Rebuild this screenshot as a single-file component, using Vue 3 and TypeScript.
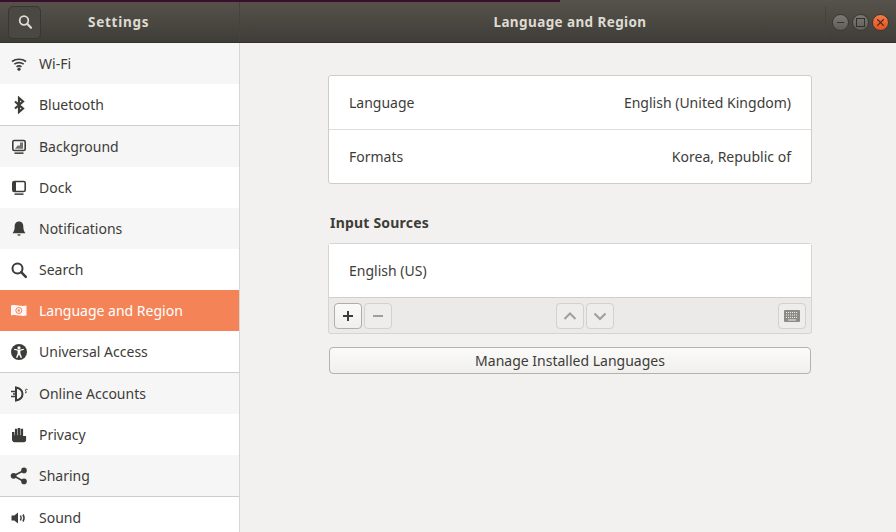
<script setup lang="ts">
interface Item { label: string; icon: string; striped: boolean; active?: boolean; sepAfter?: boolean }
const items: Item[] = [
  { label: 'Wi-Fi', icon: 'wifi', striped: true },
  { label: 'Bluetooth', icon: 'bt', striped: false, sepAfter: true },
  { label: 'Background', icon: 'bg', striped: true },
  { label: 'Dock', icon: 'dock', striped: false },
  { label: 'Notifications', icon: 'bell', striped: true },
  { label: 'Search', icon: 'search', striped: false },
  { label: 'Language and Region', icon: 'flag', striped: false, active: true },
  { label: 'Universal Access', icon: 'access', striped: false, sepAfter: true },
  { label: 'Online Accounts', icon: 'online', striped: true },
  { label: 'Privacy', icon: 'hand', striped: false },
  { label: 'Sharing', icon: 'share', striped: true, sepAfter: true },
  { label: 'Sound', icon: 'sound', striped: false },
]
</script>

<template>
  <div class="win">
    <header class="bar">
      <div class="bar-left">
        <button class="search-btn">
          <svg width="16" height="16" viewBox="0 0 16 16"><circle cx="7" cy="6.500" r="4.300" fill="none" stroke="#dedbd4" stroke-width="1.800"/><path d="M10.200 9.800 14 13.800" stroke="#dedbd4" stroke-width="2.200" stroke-linecap="round"/></svg>
        </button>
        <span class="bar-title settings">Settings</span>
      </div>
      <div class="bar-main">
        <span class="bar-title main-title">Language and Region</span>
        <div class="controls">
          <span class="ctl"><svg width="18" height="18" viewBox="0 0 18 18"><path d="M4 9h10" stroke="#2f2e2a" stroke-width="1.300"/></svg></span>
          <span class="ctl"><svg width="18" height="18" viewBox="0 0 18 18"><rect x="3.500" y="3.500" width="11" height="11" fill="none" stroke="#2f2e2a" stroke-width="1.300"/></svg></span>
          <span class="ctl close"><svg width="18" height="18" viewBox="0 0 18 18"><path d="M4.500 4.500l9 9M13.500 4.500l-9 9" stroke="#4a2a18" stroke-width="1.500"/></svg></span>
        </div>
      </div>
    </header>
    <div class="body">
      <nav class="side">
        <div v-for="it in items" :key="it.label" class="row" :class="{ striped: it.striped, active: it.active, sep: it.sepAfter }">
          <svg class="ico" width="18" height="18" viewBox="0 0 18 18">
            <g v-if="it.icon === 'wifi'" fill="none" stroke="currentColor" stroke-width="1.600">
              <path d="M2 6.500c4-3 10-3 14 0"/><path d="M4.300 9.200c3-2 6.400-2 9.400 0"/><path d="M6.500 11.700c1.600-1 3.400-1 5 0"/>
              <circle cx="9" cy="14.200" r="1.600" fill="currentColor" stroke="none"/>
            </g>
            <path v-else-if="it.icon === 'bt'" d="M5 5.500l8 7-4 3.500V2l4 3.500-8 7" fill="none" stroke="currentColor" stroke-width="2.200"/>
            <g v-else-if="it.icon === 'bg'">
              <rect x="2.800" y="2.500" width="12.400" height="10" rx="1.500" fill="none" stroke="currentColor" stroke-width="1.600"/>
              <path d="M5 10.800h8V4.600h-3v3H7.500z" fill="currentColor" opacity=".7"/>
              <rect x="4.500" y="14.400" width="9" height="1.500" fill="currentColor"/>
            </g>
            <g v-else-if="it.icon === 'dock'">
              <rect x="2.800" y="2.500" width="12.400" height="10" rx="1.500" fill="none" stroke="currentColor" stroke-width="1.600"/>
              <rect x="3" y="3" width="3" height="9" fill="currentColor"/>
              <rect x="4.500" y="14.400" width="9" height="1.500" fill="currentColor"/>
            </g>
            <g v-else-if="it.icon === 'bell'" fill="currentColor">
              <path d="M9 1.500c-3 0-4.300 2.300-4.300 5 0 3.200-.9 5-2.200 6.700h13c-1.300-1.700-2.200-3.500-2.200-6.700 0-2.700-1.300-5-4.300-5z"/><rect x="7.600" y="14.300" width="2.800" height="1.300"/>
            </g>
            <g v-else-if="it.icon === 'search'" fill="none" stroke="currentColor">
              <circle cx="7.500" cy="7.500" r="5" stroke-width="2"/><path d="M11.200 11.200l4.600 4.600" stroke-width="2.500" stroke-linecap="round"/>
            </g>
            <g v-else-if="it.icon === 'flag'">
              <path d="M1 3.500c5.500-1.500 10 1.500 15.500 0v10c-5.500 1.500-10-1.500-15.500 0z" fill="#fff" opacity=".92"/>
              <circle cx="8.800" cy="8.500" r="3" fill="none" stroke="#f3845a" stroke-width="1"/>
              <circle cx="8.800" cy="8.500" r="1.200" fill="#f3845a"/>
            </g>
            <g v-else-if="it.icon === 'access'">
              <circle cx="9" cy="9" r="8" fill="currentColor"/>
              <circle cx="9" cy="4.800" r="1.600" fill="#fff"/>
              <path d="M4 6.800l3.600 1v2.700L6 14.500l1.200.5L9 11.500l1.800 3.500 1.200-.5-1.600-4V7.800l3.600-1-.3-1.100L9 6.800 4.300 5.700z" fill="#fff"/>
            </g>
            <g v-else-if="it.icon === 'online'" fill="none" stroke="currentColor">
              <path d="M6 2.500c4.500 1 6.500 3.500 6.500 6.500S10.500 14.500 6 15.500z" stroke-width="2"/>
              <path d="M1 6.500h5M1 11.500h5M3 9h3" stroke-width="1.600"/>
              <path d="M17.500 4.500c-1.800-.8-2.600.5-1.800 1.500.8 1 1.200 2-.7 1.800" stroke-width="1"/>
            </g>
            <path v-else-if="it.icon === 'hand'" fill="currentColor" d="M2 6h2.400v3.200h.5V2.800h2.400v6.400h.5V2h2.400v7.200h.5V2.800h2.400V10h3v4c0 1.300-1 2.200-2.200 2.200H4.500C3 16.200 2 15 2 13.600z"/>
            <g v-else-if="it.icon === 'share'" fill="currentColor">
              <circle cx="3.600" cy="8.800" r="2.900"/><circle cx="14" cy="3.400" r="2.800"/><circle cx="14" cy="14.400" r="2.800"/>
              <path d="M3.600 8.800l10.400-5.400M3.600 8.800L14 14.400" stroke="currentColor" stroke-width="1.700"/>
            </g>
            <g v-else-if="it.icon === 'sound'" fill="currentColor">
              <path d="M1.500 6.500h2.800L8 3.500v11l-3.700-3H1.500z"/>
              <path d="M10.500 6.500c.8 1.500.8 3.500 0 5M13 5.500c1.200 2 1.200 5 0 7" fill="none" stroke="currentColor" stroke-width="1.500"/>
            </g>
          </svg>
          <span class="row-label">{{ it.label }}</span>
        </div>
      </nav>
      <main class="content">
        <section class="card">
          <div class="line"><span>Language</span><span>English (United Kingdom)</span></div>
          <div class="line divided"><span>Formats</span><span>Korea, Republic of</span></div>
        </section>
        <h2 class="heading">Input Sources</h2>
        <section class="inputs">
          <div class="input-row">English (US)</div>
          <div class="toolbar">
            <div class="group">
              <button class="tool on"><svg width="16" height="16" viewBox="0 0 16 16"><path d="M8 3v10M3 8h10" stroke="#3d3c38" stroke-width="2"/></svg></button>
              <button class="tool"><svg width="16" height="16" viewBox="0 0 16 16"><path d="M3 8h10" stroke="#a09e99" stroke-width="2"/></svg></button>
            </div>
            <div class="group">
              <button class="tool"><svg width="16" height="16" viewBox="0 0 16 16"><path d="M2.500 11L8 5.500 13.500 11" fill="none" stroke="#a09e99" stroke-width="2"/></svg></button>
              <button class="tool"><svg width="16" height="16" viewBox="0 0 16 16"><path d="M2.500 5.500L8 11l5.500-5.500" fill="none" stroke="#a09e99" stroke-width="2"/></svg></button>
            </div>
            <div class="group">
              <button class="tool"><svg width="18" height="14" viewBox="0 0 18 14"><rect x="1" y="1" width="16" height="12" rx="1" fill="#8d8b86"/><path d="M3 3.500h12M3 6h12M3 8.500h12" stroke="#efeeec" stroke-width="1" stroke-dasharray="1 1"/><path d="M5 11h8" stroke="#efeeec" stroke-width="1"/></svg></button>
            </div>
          </div>
        </section>
        <button class="manage">Manage Installed Languages</button>
      </main>
    </div>
  </div>
</template>

<style scoped>
.win { width: 896px; height: 532px; overflow: hidden; display: flex; flex-direction: column; font-family: "Noto Sans", "Open Sans", sans-serif; font-size: 14px; color: #3d3c38; background: #f2f1ef; }
.bar { height: 43px; flex: none; box-sizing: border-box; display: flex; background: linear-gradient(#3a0f2c 0, #3a0f2c 2px, #56524b 2px, #3f3d38 100%); border-bottom: 1px solid #33312d; padding-top: 2px; }
.bar-left { width: 240px; flex: none; box-sizing: border-box; display: flex; align-items: center; padding-left: 8px; border-right: 1px solid #45433e; }
.search-btn { width: 33px; height: 33px; box-sizing: border-box; padding: 0; display: flex; align-items: center; justify-content: center; border: 1px solid #383732; border-radius: 5px; background: #4a4842; }
.bar-title { font-weight: 700; font-size: 13.500px; color: #dfdbd2; letter-spacing: .4px; }
.settings { margin-left: 47px; letter-spacing: .75px; }
.main-title { margin-left: 4px; }
.bar-main { flex: 1; position: relative; display: flex; align-items: center; justify-content: center; }
.bar-main::before { content: ""; position: absolute; left: 320px; right: 0; top: -2px; height: 2px; background: #56534d; }
.controls { position: absolute; right: 7px; top: 4px; display: flex; gap: 3px; border-left: 1px solid #45433e; padding-left: 6px; height: 32px; align-items: center; }
.ctl { width: 17px; height: 17px; box-sizing: border-box; border-radius: 50%; background: linear-gradient(#7b7972, #5f5d57); display: flex; align-items: center; justify-content: center; border: 1px solid #3a3833; }
.ctl svg { width: 13px; height: 13px; }
.close { background: linear-gradient(#f37a4a, #e3541f); }
.body { flex: 1; display: flex; min-height: 0; }
.side { width: 240px; flex: none; box-sizing: border-box; background: #fff; border-right: 1px solid #d8d6d2; overflow: hidden; }
.row { height: 41px; display: flex; align-items: center; padding-left: 10px; box-sizing: content-box; }
.row.striped { background: #f6f6f6; }
.row.active { background: #f48458; color: #fff; }
.row.sep { border-bottom: 1px solid #cfcdc9; }
.ico { flex: none; color: #3d3c38; }
.active .ico { color: #fff; }
.row-label { margin-left: 11px; }
.content { flex: 1; display: flex; flex-direction: column; align-items: flex-start; padding: 32px 0 0 88px; }
.card { width: 484px; box-sizing: border-box; background: #fff; border: 1px solid #cfcdc9; border-radius: 3px; }
.line { height: 53px; display: flex; justify-content: space-between; align-items: center; padding: 0 20px; }
.line.divided { height: 54px; box-sizing: border-box; border-top: 1px solid #dedcd9; }
.heading { margin: 29px 0 11px 2px; font-size: 14px; font-weight: 700; line-height: 19px; color: #3d3c38; letter-spacing: .2px; }
.inputs { width: 484px; box-sizing: border-box; border: 1px solid #d6d4d0; border-radius: 3px; background: #ebeae8; }
.input-row { height: 54px; box-sizing: border-box; background: #fff; display: flex; align-items: center; padding-left: 20px; border-bottom: 1px solid #d0cecb; }
.toolbar { height: 35px; display: flex; justify-content: space-between; align-items: center; padding: 0 5px; }
.group { display: flex; gap: 2px; }
.tool { width: 28px; height: 26px; box-sizing: border-box; padding: 0; display: flex; align-items: center; justify-content: center; border: 1px solid #d3d1cd; border-radius: 4px; background: #eeedeb; }
.tool.on { border-color: #b0aea9; background: linear-gradient(#fafafa, #f0efed); }
.manage { margin: 13px 0 0 1px; width: 482px; height: 27px; box-sizing: border-box; padding: 0; border: 1px solid #b4b2ad; border-radius: 4px; background: linear-gradient(#fbfbfa, #f0efed); font: inherit; color: #3d3c38; }
</style>

<style>
html, body { margin: 0; background: #f2f1ef; }
</style>
